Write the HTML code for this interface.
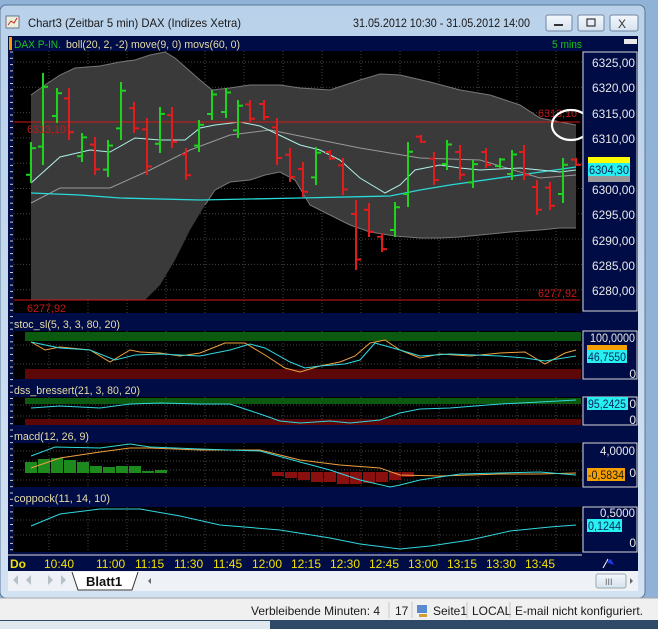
<!DOCTYPE html><html><head><meta charset="utf-8"><style>
html,body{margin:0;padding:0;width:658px;height:629px;overflow:hidden;background:#c9dbee}
svg{display:block}
text{font-family:"Liberation Sans",sans-serif}
</style></head><body>
<svg id="s" width="658" height="629" viewBox="0 0 658 629" xmlns="http://www.w3.org/2000/svg">
<defs>
<linearGradient id="fr" x1="0" y1="0" x2="0" y2="1"><stop offset="0" stop-color="#b9d1ea"/><stop offset="1" stop-color="#d3e2f2"/></linearGradient>
<linearGradient id="bt" x1="0" y1="0" x2="0" y2="1"><stop offset="0" stop-color="#f4f8fc"/><stop offset="1" stop-color="#d5e2ef"/></linearGradient>
</defs>
<rect width="658" height="629" fill="#8fb2d6"/>
<rect x="0" y="5" width="645" height="593" rx="6" fill="url(#fr)" stroke="#5a7696"/>
<rect x="6" y="16" width="13" height="12" fill="#e8f0d8" stroke="#558" stroke-width="0.8"/>
<path d="M8 25 l3-4 3 2 3-5" stroke="#c22" fill="none"/>
<text x="28" y="27" font-size="12" fill="#1a1a1a" textLength="213" lengthAdjust="spacingAndGlyphs">Chart3 (Zeitbar 5 min)  DAX (Indizes Xetra)</text>
<text x="353" y="27" font-size="12" fill="#1a1a1a" textLength="177" lengthAdjust="spacingAndGlyphs">31.05.2012 10:30 - 31.05.2012 14:00</text>
<rect x="546" y="15" width="26" height="16" rx="2" fill="url(#bt)" stroke="#6f86a2"/>
<rect x="554" y="24" width="9" height="2" fill="#333"/>
<rect x="578" y="15" width="26" height="16" rx="2" fill="url(#bt)" stroke="#6f86a2"/>
<rect x="587" y="19" width="8" height="7" fill="none" stroke="#333" stroke-width="1.2"/>
<rect x="610" y="15" width="28" height="16" rx="2" fill="url(#bt)" stroke="#6f86a2"/>
<text x="618" y="28" font-size="12" fill="#333">X</text>
<rect x="8" y="36" width="630" height="535" fill="#000c45"/>
<rect x="9" y="37" width="3" height="13" fill="#f5a000"/>
<text x="14" y="48" font-size="11" fill="#19c419" textLength="47" lengthAdjust="spacingAndGlyphs">DAX P-IN.</text>
<text x="66" y="48" font-size="11" fill="#e6dca6" textLength="174" lengthAdjust="spacingAndGlyphs">boll(20, 2, -2) move(9, 0) movs(60, 0)</text>
<text x="552" y="48" font-size="11" fill="#19c419" textLength="30" lengthAdjust="spacingAndGlyphs">5 mins</text>
<rect x="624" y="39" width="13" height="5" fill="#e8e8e8"/>
<rect x="14" y="51" width="568" height="262" fill="#000"/>
<rect x="14" y="331" width="568" height="48" fill="#000"/>
<rect x="14" y="397" width="568" height="28" fill="#000"/>
<rect x="14" y="443" width="568" height="44" fill="#000"/>
<rect x="14" y="507" width="568" height="45" fill="#000"/>
<g id="grid"></g>
<polygon fill="#3a3a3a" points="31,95 45,85 60,75 75,68 100,66 120,62 135,60 150,55 165,52 175,58 200,80 212,90 230,88 250,85 280,85 300,88 330,90 360,80 380,74 400,75 430,82 460,90 490,95 520,105 540,118 560,122 576,125 576,228 560,228 540,230 510,232 480,235 460,237 440,238 420,238 395,236 370,232 350,225 330,215 310,205 295,180 280,172 265,175 250,180 230,182 215,190 205,205 190,230 175,260 160,285 145,300 125,300 31,300"/>
<polyline fill="none" stroke="#777" points="31,95 45,85 60,75 75,68 100,66 120,62 135,60 150,55 165,52 175,58 200,80 212,90 230,88 250,85 280,85 300,88 330,90 360,80 380,74 400,75 430,82 460,90 490,95 520,105 540,118 560,122 576,125"/>
<polyline fill="none" stroke="#777" points="576,228 560,228 540,230 510,232 480,235 460,237 440,238 420,238 395,236 370,232 350,225 330,215 310,205 295,180 280,172 265,175 250,180 230,182 215,190 205,205"/>
<polyline fill="none" stroke="#999" points="31,203 60,188 110,188 150,170 190,150 230,135 270,130 310,138 360,148 420,158 480,160 540,178 576,175"/>
<polyline fill="none" stroke="#2ad8d8" stroke-width="1.3" points="31,193 80,195 120,198 200,200 300,198 390,196 420,190 450,185 520,175 576,167"/>
<polyline fill="none" stroke="#aef0e8" points="31,183 60,157 90,150 110,152 135,138 160,140 185,140 200,128 215,125 240,122 260,126 275,133 300,145 320,150 340,160 360,178 385,193 400,185 415,170 440,165 460,168 480,170 520,168 560,172 576,170"/>
<line x1="14" y1="122" x2="580" y2="122" stroke="#d01818"/>
<line x1="14" y1="300" x2="580" y2="300" stroke="#d01818"/>
<g id="bars"></g>
<g font-size="11" fill="#c81818">
<text x="27" y="133" textLength="39" lengthAdjust="spacingAndGlyphs">6313,10</text>
<text x="538" y="117" textLength="39" lengthAdjust="spacingAndGlyphs">6313,10</text>
<text x="27" y="312" textLength="39" lengthAdjust="spacingAndGlyphs">6277,92</text>
<text x="538" y="297" textLength="39" lengthAdjust="spacingAndGlyphs">6277,92</text>
</g>
<ellipse cx="571" cy="125" rx="19" ry="15" fill="none" stroke="#fff" stroke-width="2.2"/>
<rect x="583" y="52" width="54" height="259" fill="#000c45" stroke="#d8d8d8"/>
<g font-size="12" fill="#e8e8e8">
<text x="592" y="67" textLength="43" lengthAdjust="spacingAndGlyphs">6325,00</text><text x="592" y="92" textLength="43" lengthAdjust="spacingAndGlyphs">6320,00</text><text x="592" y="118" textLength="43" lengthAdjust="spacingAndGlyphs">6315,00</text><text x="592" y="143" textLength="43" lengthAdjust="spacingAndGlyphs">6310,00</text><text x="592" y="194" textLength="43" lengthAdjust="spacingAndGlyphs">6300,00</text><text x="592" y="219" textLength="43" lengthAdjust="spacingAndGlyphs">6295,00</text><text x="592" y="245" textLength="43" lengthAdjust="spacingAndGlyphs">6290,00</text><text x="592" y="270" textLength="43" lengthAdjust="spacingAndGlyphs">6285,00</text><text x="592" y="295" textLength="43" lengthAdjust="spacingAndGlyphs">6280,00</text>
</g>
<rect x="588" y="157" width="42" height="8" fill="#ffff00"/>
<rect x="588" y="172" width="42" height="10" fill="#999"/>
<rect x="588" y="163" width="42" height="13" fill="#27f0f0"/>
<text x="589" y="174" font-size="12" fill="#0a2a60" textLength="40" lengthAdjust="spacingAndGlyphs">6304,30</text>
<g font-size="11" fill="#e6dca6">
<text x="14" y="328" textLength="106" lengthAdjust="spacingAndGlyphs">stoc_sl(5, 3, 3, 80, 20)</text>
<text x="14" y="394" textLength="126" lengthAdjust="spacingAndGlyphs">dss_bressert(21, 3, 80, 20)</text>
<text x="14" y="440" textLength="75" lengthAdjust="spacingAndGlyphs">macd(12, 26, 9)</text>
<text x="14" y="502" textLength="96" lengthAdjust="spacingAndGlyphs">coppock(11, 14, 10)</text>
</g>
<rect x="25" y="332" width="556" height="9" fill="#0b5a10"/>
<rect x="25" y="369" width="556" height="10" fill="#5c0808"/>
<polyline fill="none" stroke="#f0a040" points="31,342 45,350 60,347 90,350 110,362 130,350 140,352 160,353 180,356 200,353 225,343 245,343 265,355 285,368 300,372 320,366 340,362 355,356 370,343 385,340 400,350 420,358 440,354 470,356 500,353 525,352 545,364 565,353 576,350"/>
<polyline fill="none" stroke="#30d8e0" points="31,342 60,348 90,350 115,360 135,355 160,354 200,356 230,350 250,344 265,348 290,362 305,368 320,366 345,364 360,360 375,343 400,350 420,356 450,354 500,356 525,358 545,361 576,356"/>
<rect x="583" y="331" width="54" height="48" fill="#000c45" stroke="#d8d8d8"/>
<text x="590" y="342" font-size="12" fill="#e8e8e8" textLength="45" lengthAdjust="spacingAndGlyphs">100,0000</text>
<rect x="587" y="345" width="40" height="6" fill="#f5a000"/>
<rect x="587" y="350" width="40" height="13" fill="#27f0f0"/>
<text x="588" y="361" font-size="12" fill="#0a2a60" textLength="38" lengthAdjust="spacingAndGlyphs">46,7550</text>
<text x="636" y="378" font-size="12" fill="#e8e8e8" text-anchor="end">0</text>
<rect x="25" y="398" width="556" height="6" fill="#0b5a10"/>
<rect x="25" y="419" width="556" height="6" fill="#5c0808"/>
<polyline fill="none" stroke="#30d8e0" points="31,408 60,406 100,408 130,404 160,403 200,404 230,404 260,414 280,421 300,423 330,421 350,423 380,420 400,413 420,409 450,408 500,404 540,402 576,400"/>
<rect x="583" y="397" width="54" height="28" fill="#000c45" stroke="#d8d8d8"/>
<rect x="587" y="397" width="41" height="13" fill="#27f0f0"/>
<text x="588" y="408" font-size="12" fill="#0a2a60" textLength="38" lengthAdjust="spacingAndGlyphs">95,2425</text>
<text x="636" y="408" font-size="12" fill="#e8e8e8" text-anchor="end">0</text>
<text x="636" y="424" font-size="12" fill="#e8e8e8" text-anchor="end">0</text>
<g fill="#1d8a1d"><rect x="25" y="462" width="12" height="11"/><rect x="38" y="459" width="12" height="14"/><rect x="51" y="458" width="12" height="15"/><rect x="64" y="460" width="12" height="13"/><rect x="77" y="462" width="12" height="11"/><rect x="90" y="466" width="12" height="7"/><rect x="103" y="467" width="12" height="6"/><rect x="116" y="466" width="12" height="7"/><rect x="129" y="466" width="12" height="7"/><rect x="142" y="471" width="12" height="2"/><rect x="155" y="470" width="12" height="3"/></g>
<g fill="#8a1010"><rect x="272" y="472" width="12" height="4"/><rect x="285" y="472" width="12" height="6"/><rect x="298" y="472" width="12" height="8"/><rect x="311" y="472" width="12" height="10"/><rect x="324" y="472" width="12" height="10"/><rect x="337" y="472" width="12" height="12"/><rect x="350" y="472" width="12" height="12"/><rect x="363" y="472" width="12" height="11"/><rect x="376" y="472" width="12" height="10"/><rect x="389" y="472" width="12" height="8"/><rect x="402" y="472" width="12" height="5"/></g>
<polyline fill="none" stroke="#f0a040" points="31,468 60,458 100,452 130,448 150,448 200,450 260,450 300,460 340,465 380,468 400,475 440,476 500,474 540,474 576,473"/>
<polyline fill="none" stroke="#30d8e0" points="31,456 55,447 100,448 130,444 150,447 200,449 260,451 300,462 330,470 360,480 390,487 400,485 420,480 460,474 500,473 540,472 576,475"/>
<rect x="583" y="443" width="54" height="44" fill="#000c45" stroke="#d8d8d8"/>
<text x="600" y="455" font-size="12" fill="#e8e8e8" textLength="35" lengthAdjust="spacingAndGlyphs">4,0000</text>
<rect x="587" y="468" width="38" height="13" fill="#f5a000"/>
<text x="588" y="479" font-size="12" fill="#1a1a1a" textLength="36" lengthAdjust="spacingAndGlyphs">-0,5834</text>
<text x="636" y="477" font-size="12" fill="#e8e8e8" text-anchor="end">0</text>
<polyline fill="none" stroke="#30d8e0" points="31,526 60,514 100,509 140,509 180,516 220,525 280,530 330,538 360,544 400,549 430,546 470,540 510,531 550,527 576,525"/>
<rect x="583" y="507" width="54" height="45" fill="#000c45" stroke="#d8d8d8"/>
<text x="600" y="517" font-size="12" fill="#e8e8e8" textLength="35" lengthAdjust="spacingAndGlyphs">0,5000</text>
<rect x="587" y="519" width="35" height="13" fill="#27f0f0"/>
<text x="588" y="530" font-size="12" fill="#0a2a60" textLength="33" lengthAdjust="spacingAndGlyphs">0,1244</text>
<text x="636" y="547" font-size="12" fill="#e8e8e8" text-anchor="end">0</text>
<line x1="8" y1="555" x2="582" y2="555" stroke="#ddd"/>
<text x="10" y="568" font-size="12" font-weight="bold" fill="#f0e000">Do</text>
<g font-size="12" fill="#f0e000">
<text x="44" y="568">10:40</text><text x="96" y="568">11:00</text><text x="135" y="568">11:15</text><text x="174" y="568">11:30</text><text x="213" y="568">11:45</text><text x="252" y="568">12:00</text><text x="291" y="568">12:15</text><text x="330" y="568">12:30</text><text x="369" y="568">12:45</text><text x="408" y="568">13:00</text><text x="447" y="568">13:15</text><text x="486" y="568">13:30</text><text x="525" y="568">13:45</text>
</g>
<path d="M603 568 l5-9" stroke="#fff"/><path d="M606 562 l5-3 3 6z" fill="#1a3ae0"/>
<rect x="8" y="571" width="630" height="20" fill="#eef2f6"/>
<g fill="#b8c0c8"><path d="M13 580 l5-5 v10z"/><path d="M26 580 l5-5 v10z"/><path d="M48 575 l5 5 -5 5z"/><path d="M61 575 l5 5 -5 5z"/></g>
<path d="M72 572 l6 18 h54 l6-18" fill="#fff" stroke="#333"/>
<text x="86" y="586" font-size="13" font-weight="bold" fill="#111">Blatt1</text>
<path d="M148 581 l3-3 v6z" fill="#666"/>
<rect x="596" y="574" width="30" height="14" rx="2" fill="url(#bt)" stroke="#9aa"/>
<text x="605" y="585" font-size="9" fill="#666">III</text>
<path d="M630 578 l3 3 -3 3z" fill="#666"/>
<rect x="0" y="598" width="658" height="22" fill="#f0f0f0"/>
<line x1="0" y1="598" x2="658" y2="598" stroke="#a0a8b0"/>
<g font-size="12" fill="#1a1a1a"><text x="251" y="615" textLength="129" lengthAdjust="spacingAndGlyphs">Verbleibende Minuten: 4</text><text x="395" y="615">17</text><text x="433" y="615">Seite1</text><text x="472" y="615">LOCAL</text><text x="515" y="615" textLength="128" lengthAdjust="spacingAndGlyphs">E-mail nicht konfiguriert.</text></g>
<rect x="417" y="605" width="10" height="8" fill="#5a8ad0"/><rect x="419" y="614" width="8" height="3" fill="#d0a030"/>
<g stroke="#c8c8c8"><line x1="389" y1="602" x2="389" y2="618"/><line x1="412" y1="602" x2="412" y2="618"/><line x1="467" y1="602" x2="467" y2="618"/><line x1="510" y1="602" x2="510" y2="618"/></g>
<rect x="0" y="620" width="658" height="9" fill="#2e4a66"/>
<rect x="0" y="621" width="270" height="8" fill="#dfe7ef"/>
</svg>
<script>
var ns="http://www.w3.org/2000/svg",g=document.getElementById('grid'),b=document.getElementById('bars');
function L(p,x1,y1,x2,y2,c,w,d){var l=document.createElementNS(ns,'line');l.setAttribute('x1',x1);l.setAttribute('y1',y1);l.setAttribute('x2',x2);l.setAttribute('y2',y2);l.setAttribute('stroke',c);l.setAttribute('stroke-width',w||1);if(d)l.setAttribute('stroke-dasharray',d);p.appendChild(l);}
var panels=[[51,313],[331,379],[397,425],[443,487],[507,552]];
for(var x=49;x<582;x+=39)panels.forEach(function(p){L(g,x,p[0],x,p[1],'#444',1,'1 2');});
for(var y=62;y<312;y+=25.3)L(g,14,y,582,y,'#444',1,'1 2');
[[345,364],[405,416],[451,461,470,480],[520,535]].forEach(function(a){a.forEach(function(y){L(g,14,y,582,y,'#444',1,'1 2');});});
for(var y=52;y<552;y+=6.3)L(g,10,y,13,y,'#ccc',1);
var B=[[31,142,183,1],[43,73,165,1],[57,88,123,1],[69,88,140,0],[82,133,162,1],[95,137,175,0],[108,140,177,1],[121,82,140,1],[134,102,133,0],[147,118,175,0],[160,107,153,1],[172,107,148,0],[186,148,180,0],[199,120,152,1],[212,90,120,1],[226,88,118,1],[238,100,138,1],[250,100,122,0],[264,100,120,0],[277,118,165,0],[290,148,182,0],[303,162,197,0],[316,147,185,1],[330,150,160,0],[343,158,195,0],[356,200,270,0],[369,203,237,0],[382,233,252,0],[395,202,237,1],[408,142,207,1],[421,135,143,0],[434,152,185,0],[447,140,170,1],[460,145,180,0],[473,160,188,1],[486,148,168,0],[500,158,168,1],[512,150,180,1],[524,145,180,0],[537,180,215,0],[550,182,210,0],[563,158,203,1],[576,158,166,0]];
B.forEach(function(a){var c=a[3]?'#1ed21e':'#e01c1c',h=a[2]-a[1],o=a[3]?a[2]-h*0.2:a[1]+h*0.2,cl=a[3]?a[1]+h*0.15:a[2]-h*0.15;L(b,a[0],a[1],a[0],a[2],c,2);L(b,a[0]-5,o,a[0],o,c,2);L(b,a[0],cl,a[0]+5,cl,c,2);});
</script>
</body></html>
